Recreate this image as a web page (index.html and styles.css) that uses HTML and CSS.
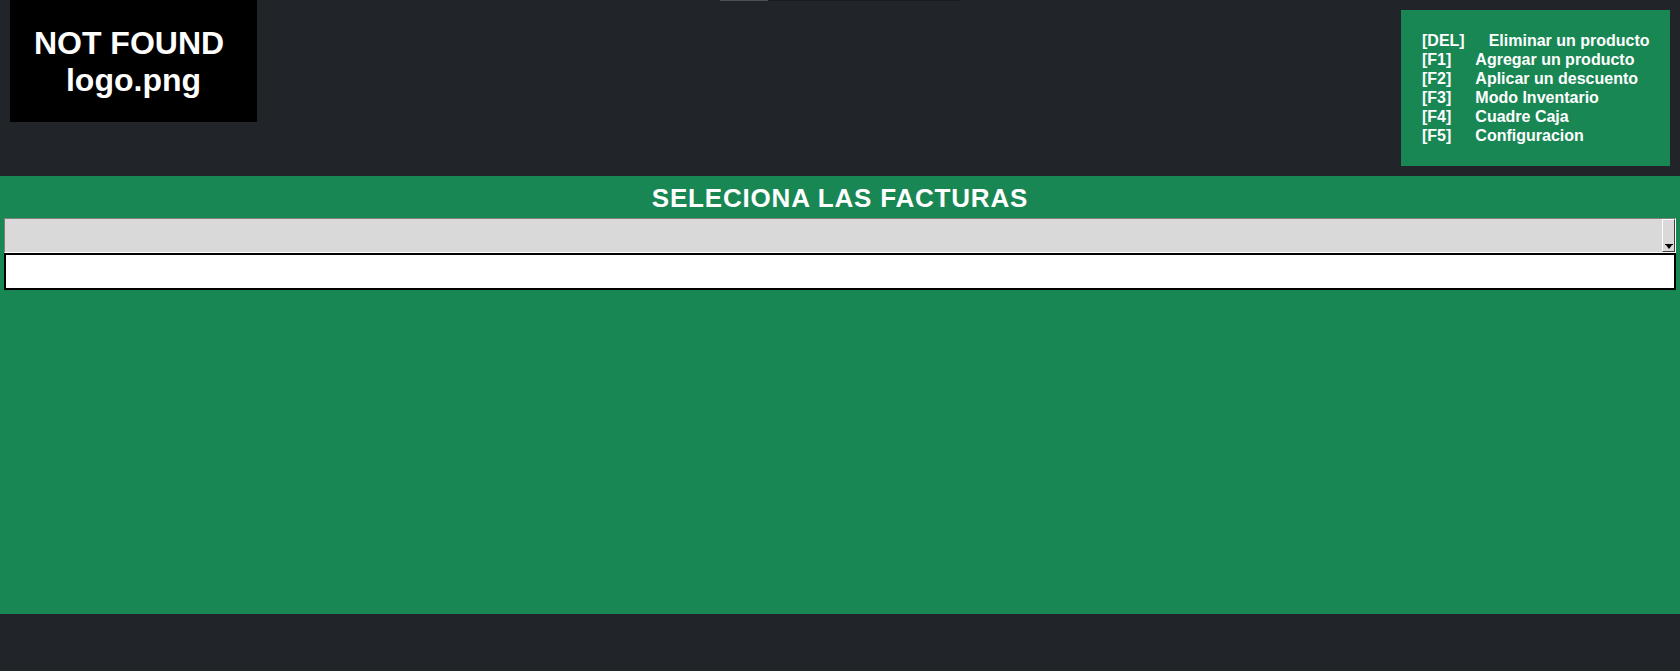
FILE: index.html
```html
<!DOCTYPE html>
<html lang="es">
<head>
<meta charset="utf-8">
<title>Facturas</title>
<link rel="stylesheet" href="styles.css">
</head>
<body>
<header class="top">
  <div class="logo">
    <span class="logo-line1">NOT FOUND</span>
    <span>logo.png</span>
  </div>
  <div class="scrollbar"><div class="thumb"></div></div>
  <div class="shortcuts">
    <div class="row"><span class="key">[DEL]</span><span>Eliminar un producto</span></div>
    <div class="row"><span class="key">[F1]</span><span>Agregar un producto</span></div>
    <div class="row"><span class="key">[F2]</span><span>Aplicar un descuento</span></div>
    <div class="row"><span class="key">[F3]</span><span>Modo Inventario</span></div>
    <div class="row"><span class="key">[F4]</span><span>Cuadre Caja</span></div>
    <div class="row"><span class="key">[F5]</span><span>Configuracion</span></div>
  </div>
</header>
<main class="panel">
  <h1 class="title">SELECIONA LAS FACTURAS</h1>
  <div class="select">
    <div class="select-btn">
      <svg width="8" height="5" viewBox="0 0 8 5"><path d="M0 0H8V1H7L4 5L1 1H0Z" fill="#000"/></svg>
    </div>
  </div>
  <input class="field" type="text">
</main>
</body>
</html>
```

FILE: styles.css
```css
* { box-sizing: border-box; }

html, body {
  margin: 0;
  padding: 0;
}

body {
  background: #212529;
  font-family: "Liberation Sans", Arial, sans-serif;
  color: #fff;
  height: 671px;
  overflow: hidden;
}

.top {
  display: grid;
  grid-template-columns: 1fr auto 1fr;
  align-items: start;
  height: 176px;
}

.logo {
  justify-self: start;
  margin-left: 10px;
  width: 247px;
  height: 122px;
  background: #000;
  color: #fff;
  font-weight: bold;
  font-size: 32px;
  line-height: 37px;
  display: flex;
  flex-direction: column;
  align-items: center;
  justify-content: center;
  padding-top: 1px;
}

.logo-line1 {
  padding-right: 9px;
}

.scrollbar {
  justify-self: center;
  width: 241px;
  height: 1px;
  background: #1a1d20;
  display: flex;
}

.thumb {
  width: 48px;
  height: 1px;
  background: #4d4f52;
}

.shortcuts {
  justify-self: end;
  margin: 10px 10px 0 0;
  width: 269px;
  height: 156px;
  background: #198754;
  padding: 21px 0 21px 21px;
  font-weight: bold;
  font-size: 16px;
  line-height: 19px;
}

.row {
  display: flex;
  white-space: nowrap;
}

.key {
  margin-right: 24px;
}

.panel {
  background: #198754;
  height: 438px;
  padding: 0 4px;
}

.title {
  margin: 0;
  padding: 8px 0 5px;
  font-size: 26px;
  line-height: 29px;
  letter-spacing: 0.8px;
  font-weight: bold;
  text-align: center;
  color: #fff;
}

.select {
  height: 35px;
  background: #d9d9d9;
  border-top: 1px solid #7f7f7f;
  border-left: 1px solid #7f7f7f;
  border-bottom: 1px solid #fff;
  border-right: 1px solid #fff;
  display: flex;
  justify-content: flex-end;
}

.select-btn {
  width: 13px;
  height: 100%;
  background: #d9d9d9;
  border-top: 1px solid #fff;
  border-left: 1px solid #fff;
  border-right: 1px solid #404040;
  border-bottom: 1px solid #404040;
  display: flex;
  align-items: flex-end;
  justify-content: center;
  padding-bottom: 2px;
}

.select-btn svg {
  display: block;
}

.field {
  display: block;
  width: 100%;
  height: 37px;
  margin: 0;
  border: 2px solid #000;
  background: #fff;
  outline: none;
  padding: 0 4px;
  font: 16px "Liberation Sans", Arial, sans-serif;
}
```
